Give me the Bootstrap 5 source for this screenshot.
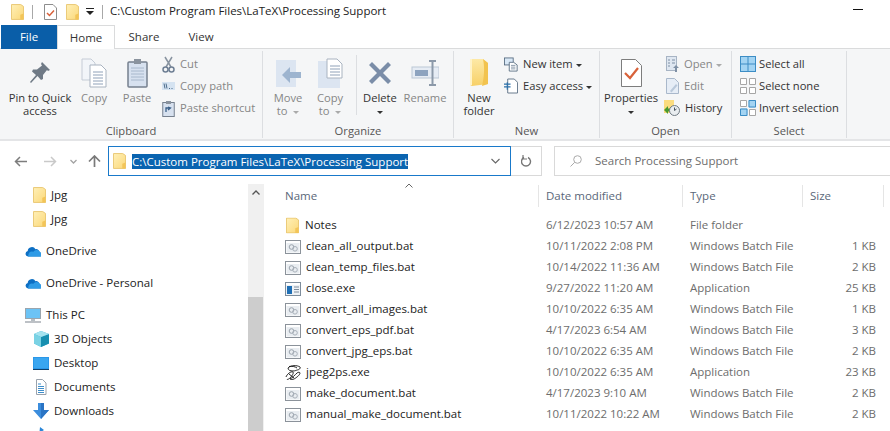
<!DOCTYPE html>
<html lang="en">
<head>
<meta charset="UTF-8">
<title>Processing Support</title>
<link href="https://cdn.jsdelivr.net/npm/bootstrap@5.3.3/dist/css/bootstrap.min.css" rel="stylesheet">
<style>
html, body { height: 100%; margin: 0; overflow: hidden; background: #fff; }
body { font-family: "Open Sans", "Noto Sans", sans-serif; font-size: 11.5px; color: #222; line-height: 1.25; }
svg { display: block; flex-shrink: 0; }

/* title bar */
.title-bar { height: 25px; padding-bottom: 2px; position: relative; }
.qa-sep { width: 1px; height: 14px; background: #a8a8a8; }
.min-btn { position: absolute; left: 853px; top: 9px; width: 10px; height: 1px; background: #111; }

/* tabs */
.tab-row { height: 24px; border-bottom: 1px solid #dadbdc; }
.rb-tab { width: 58px; height: 24px; line-height: 23px; text-align: center; font-size: 11.5px; color: #333; }
.rb-file { width: 56px; margin-left: 1px; background: #0a5ea8; color: #fff; }
.rb-home { background: #fff; border: 1px solid #dadbdc; border-bottom: 0; height: 24px; }

/* ribbon */
.ribbon { height: 92px; background: #f5f6f7; border-bottom: 2px solid #e4e5e7; padding-top: 2px; font-size: 11.2px; }
.rb-group { border-right: 1px solid #dcdee1; height: 87px; flex-shrink: 0; }
.rb-body { height: 72px; }
.rb-label { text-align: center; color: #555; height: 15px; line-height: 15px; }
.big-btn { display: flex; flex-direction: column; align-items: center; text-align: center; flex-shrink: 0; color: #333; }
.big-ico { height: 35px; margin-top: 4px; display: flex; align-items: center; justify-content: center; }
.big-txt { line-height: 13px; margin-top: 1px; }
.off { color: #868686; }
.small-col { padding-top: 2px; }
.small-btn { height: 22px; display: flex; align-items: center; gap: 5px; white-space: nowrap; color: #333; }
.small-btn.off { color: #868686; }
.drop { display: inline-block; width: 0; height: 0; border: 3px solid transparent; border-top: 3px solid #333; border-bottom: 0; vertical-align: middle; margin-left: 3px; }
.drop.off-drop { border-top-color: #aaa; }
.inner-sep { width: 1px; height: 60px; background: #dcdee1; margin: 4px 0; }

/* address row */
.addr-row { height: 38px; padding-top: 5px; }
.addr-box { width: 403px; height: 30px; margin-left: 6px; border: 1px solid #1979ca; flex-shrink: 0; }
.addr-sel { background: #0a64b0; color: #fff; height: 15px; line-height: 15px; font-size: 11.5px; white-space: nowrap; }
.refresh-box { width: 31px; height: 30px; border: 1px solid #d9d9d9; border-left: 0; flex-shrink: 0; }
.search-box { width: 336px; height: 30px; margin-left: 12px; border: 1px solid #d9d9d9; border-right: 0; color: #6d6d6d; flex-shrink: 0; }

/* bottom */
.main-area { height: 253px; }
.nav-pane { width: 248px; padding-top: 4px; flex-shrink: 0; }
.nav-row { height: 24px; display: flex; align-items: center; gap: 5px; padding-left: 25px; color: #222; white-space: nowrap; }
.nav-sub { padding-left: 33px; }
.nav-gap { margin-top: 8px; }
.scroll-bar { width: 16px; margin-top: 5px; background: #f0f0f0; flex-shrink: 0; }
.scroll-up { height: 113px; padding-top: 6px; }
.scroll-thumb { width: 15px; height: 135px; background: #cdcdcd; }

.file-pane { flex-grow: 1; position: relative; padding-left: 20px; }
.sort-mark { position: absolute; left: 141px; top: 4px; }
.head-row { height: 36px; padding-top: 6px; color: #5a6779; }
.head-cell { height: 22px; line-height: 22px; border-right: 1px solid #e5e5e5; flex-shrink: 0; }
.file-row { height: 21px; display: flex; align-items: center; white-space: nowrap; color: #6d6d6d; }
.col-name { width: 255px; padding-left: 1px; flex-shrink: 0; }
.col-date { width: 144px; padding-left: 7px; flex-shrink: 0; }
.col-type { width: 120px; padding-left: 7px; flex-shrink: 0; }
.col-size { width: 81px; padding-left: 7px; flex-shrink: 0; }
.size-val { width: 73px; text-align: right; flex-shrink: 0; }
.name-wrap { display: flex; align-items: center; gap: 5px; color: #222; }
</style>
</head>
<body>
<svg width="0" height="0" class="position-absolute">
  <defs>
    <linearGradient id="fgrad" x1="0" y1="0" x2="1" y2="1"><stop offset="0" stop-color="#fff0b8"/><stop offset="1" stop-color="#fbd879"/></linearGradient>
    <linearGradient id="fbig" x1="0" y1="0" x2="0" y2="1"><stop offset="0" stop-color="#fde9a6"/><stop offset="1" stop-color="#f7d067"/></linearGradient>
    <symbol id="folder" viewBox="0 0 14 17">
      <path d="M.5.5h10l3 2v14H.5z" fill="url(#fgrad)" stroke="#e8c56e"/>
      <path d="M10 16.5v-5l3.5-1.500v6.500z" fill="#f3c558"/>
    </symbol>
    <symbol id="bat" viewBox="0 0 16 14">
      <rect x=".5" y=".5" width="15" height="13" fill="#fff" stroke="#8b929a"/>
      <rect x="1.500" y="3" width="13" height="9.500" fill="#e9edf1"/>
      <circle cx="6.500" cy="7" r="2.300" fill="none" stroke="#9aa3ad"/>
      <circle cx="10" cy="8.800" r="2.300" fill="none" stroke="#a9b1ba"/>
    </symbol>
    <symbol id="cloud" viewBox="0 0 16 11">
      <path d="M3 10.500a2.800 2.800 0 0 1-.3-5.500 4.200 4.200 0 0 1 7.800-1.800 3.500 3.500 0 0 1 4.200 3.300 2 2 0 0 1 .8 4z" fill="#0d6fc4"/>
      <path d="M3 10.500h12a2 2 0 0 0 .3-3.900 4 4 0 0 0-7-.8 3.500 3.500 0 0 0-4.700 2z" fill="#2f9be6"/>
    </symbol>
  </defs>
</svg>

<!-- title bar -->
<div class="title-bar d-flex align-items-center">
  <svg width="13" height="16" style="margin-left:11px"><use href="#folder"/></svg>
  <div class="qa-sep" style="margin-left:8px"></div>
  <svg width="13" height="16" viewBox="0 0 13 16" style="margin-left:11px">
    <path d="M.5.500h8.500l3.500 3.500v11.500H.5z" fill="#fff" stroke="#8d8d8d"/>
    <path d="M3 9l2.500 2.500L10 6.500" fill="none" stroke="#d8603a" stroke-width="1.500"/>
  </svg>
  <svg width="13" height="16" style="margin-left:9px"><use href="#folder"/></svg>
  <svg width="8" height="7" viewBox="0 0 8 7" style="margin-left:7px"><path d="M0 .5h8" stroke="#222"/><path d="M0 3h8L4 7z" fill="#222"/></svg>
  <div class="qa-sep" style="margin-left:8px"></div>
  <div style="margin-left:7px">C:\Custom Program Files\LaTeX\Processing Support</div>
  <div class="min-btn"></div>
</div>

<!-- tabs -->
<div class="tab-row d-flex">
  <div class="rb-tab rb-file">File</div>
  <div class="rb-tab rb-home">Home</div>
  <div class="rb-tab">Share</div>
  <div class="rb-tab" style="width:56px">View</div>
</div>

<!-- ribbon -->
<div class="ribbon d-flex">
  <!-- clipboard -->
  <div class="rb-group" style="width:263px">
    <div class="rb-body d-flex">
      <div class="big-btn" style="width:72px;margin-left:4px">
        <div class="big-ico"><svg width="22" height="24" viewBox="0 0 22 24"><path d="M13 1l8 8-2 1-1-1-4 5 0 4-2 1-3.500-4L2 22l-1-1 6-7-4-3.500 1-2h4l5-4-1-1.500z" fill="#6f7a86"/></svg></div>
        <div class="big-txt">Pin to Quick<br>access</div>
      </div>
      <div class="big-btn off" style="width:36px">
        <div class="big-ico"><svg width="26" height="30" viewBox="0 0 26 30"><path d="M1 1h9l4 4v17H1z" fill="#f2f5f9" stroke="#c5ccd6"/><path d="M9 7h11l5 5v17H9z" fill="#fff" stroke="#a9b3c0"/><path d="M12 14h10M12 17h10M12 20h10M12 23h10M12 26h10" stroke="#8fa1b8"/></svg></div>
        <div class="big-txt">Copy</div>
      </div>
      <div class="big-btn off" style="width:50px">
        <div class="big-ico"><svg width="21" height="30" viewBox="0 0 21 30"><rect x="1" y="4" width="19" height="25" rx="1" fill="#d7e1ef" stroke="#76808e" stroke-width="1.500"/><rect x="7" y="1" width="7" height="5" fill="#8a939e"/><path d="M4 10h13M4 13h13M4 16h13M4 19h13M4 22h13" stroke="#a8b8cc"/></svg></div>
        <div class="big-txt">Paste</div>
      </div>
      <div class="small-col">
        <div class="small-btn off"><svg width="13" height="17" viewBox="0 0 13 17"><path d="M3 1l6 10M10 1L4 11" stroke="#8893a0" stroke-width="1.500"/><circle cx="3.500" cy="13.500" r="2.500" fill="none" stroke="#6e7f94" stroke-width="1.500"/><circle cx="9.500" cy="13.500" r="2.500" fill="none" stroke="#6e7f94" stroke-width="1.500"/></svg>Cut</div>
        <div class="small-btn off"><svg width="13" height="8" viewBox="0 0 13 8"><rect width="13" height="8" fill="#d5e3f1"/><path d="M2 1.500l1 5M4 1.500l1 5M7 6.500h1M9.500 6.500h1" stroke="#4c6c8c"/></svg>Copy path</div>
        <div class="small-btn off"><svg width="13" height="16" viewBox="0 0 13 16" style="margin-top:1px"><rect x=".75" y="1.500" width="11.500" height="14" fill="#d7e1ef" stroke="#76808e"/><rect x="4" y="0" width="5" height="3" fill="#8a939e"/><path d="M4 11V7h4M6 6l2.500 1L6 9" fill="none" stroke="#3a5f88" stroke-width="1.300"/></svg>Paste shortcut</div>
      </div>
    </div>
    <div class="rb-label">Clipboard</div>
  </div>
  <!-- organize -->
  <div class="rb-group" style="width:191px">
    <div class="rb-body d-flex">
      <div class="big-btn off" style="width:50px">
        <div class="big-ico"><svg width="28" height="28" viewBox="0 0 28 28"><rect x="2" y="1" width="20" height="27" fill="#dce5f1"/><path d="M27 13h-11V8l-8 8 8 8v-5h11z" fill="#9db4cf"/></svg></div>
        <div class="big-txt">Move<br>to <span class="drop off-drop"></span></div>
      </div>
      <div class="big-btn off" style="width:34px">
        <div class="big-ico"><svg width="26" height="30" viewBox="0 0 26 30"><rect x="1" y="3" width="22" height="27" fill="#dce5f1"/><path d="M10 1h10l5 5v14H10z" fill="#fff" stroke="#a9b3c0"/><path d="M13 8h10M13 11h10M13 14h10M13 17h10" stroke="#8fa1b8"/></svg></div>
        <div class="big-txt">Copy<br>to <span class="drop off-drop"></span></div>
      </div>
      <div style="width:9px"></div>
      <div class="inner-sep"></div>
      <div class="big-btn" style="width:46px">
        <div class="big-ico"><svg width="26" height="26" viewBox="0 0 26 26"><path d="M2 5l3-3 8 8 8-8 3 3-8 8 8 8-3 3-8-8-8 8-3-3 8-8z" fill="#7b8da8"/></svg></div>
        <div class="big-txt">Delete<br><span class="drop m-0"></span></div>
      </div>
      <div class="big-btn off" style="width:44px">
        <div class="big-ico"><svg width="28" height="26" viewBox="0 0 28 26"><rect x="1" y="7" width="27" height="11" fill="#e6ecf4" stroke="#bcc7d5"/><rect x="4" y="10" width="13" height="6" fill="#8da3bf"/><path d="M18 1h7M18 25h7M21.500 1v24" stroke="#8c99a9" stroke-width="2"/></svg></div>
        <div class="big-txt">Rename</div>
      </div>
    </div>
    <div class="rb-label">Organize</div>
  </div>
  <!-- new -->
  <div class="rb-group" style="width:146px">
    <div class="rb-body d-flex">
      <div class="big-btn" style="width:50px">
        <div class="big-ico"><svg width="20" height="27" viewBox="0 0 20 27"><path d="M1 0h13l5 4v21l-16 2-2-1z" fill="url(#fbig)"/><path d="M1 0h2v26l-2 0z" fill="#fff3c9"/><path d="M14 0l5 4v21l-6 2c2-8 3-18 1-27z" fill="#f2c34f"/></svg></div>
        <div class="big-txt">New<br>folder</div>
      </div>
      <div class="small-col">
        <div class="small-btn"><svg width="14" height="15" viewBox="0 0 16 16"><rect x=".5" y=".5" width="10" height="8" fill="#d9e8f6" stroke="#566b80"/><path d="M6 5.500h5l4 3v7H6z" fill="#fff" stroke="#566b80"/><path d="M8 9h5M8 11h5M8 13h5" stroke="#7e8fa1"/></svg><span>New item <span class="drop m-0"></span></span></div>
        <div class="small-btn"><svg width="14" height="16" viewBox="0 0 15 16"><path d="M4 .5h7l3.500 3.500v11.500H4z" fill="#fff" stroke="#5f7286"/><path d="M0 6h7M0 9h7M3.500 4v8" stroke="#2a6fa8" stroke-width="1.200"/></svg><span>Easy access <span class="drop m-0"></span></span></div>
      </div>
    </div>
    <div class="rb-label">New</div>
  </div>
  <!-- open -->
  <div class="rb-group" style="width:132px">
    <div class="rb-body d-flex">
      <div class="big-btn" style="width:62px">
        <div class="big-ico"><svg width="21" height="28" viewBox="0 0 21 28"><path d="M.5.500h14l6 6v21H.5z" fill="#fff" stroke="#7d7d7d"/><path d="M4 14l5 5 8-10" fill="none" stroke="#d8623a" stroke-width="2.200"/></svg></div>
        <div class="big-txt">Properties<br><span class="drop m-0"></span></div>
      </div>
      <div class="small-col" style="padding-left:4px">
        <div class="small-btn off"><svg width="13" height="16" viewBox="0 0 13 16"><rect x=".5" y=".5" width="10" height="14" fill="#dfe7f1" stroke="#a7b4c4"/><path d="M2 4h2M2 7h2M2 10h2M6 4h3M6 7h3" stroke="#7f90a5"/><path d="M10 9l3 3h-2v4H9v-4H7z" fill="#7f90a5"/></svg><span>Open <span class="drop off-drop m-0"></span></span></div>
        <div class="small-btn off"><svg width="13" height="16" viewBox="0 0 13 16"><path d="M.5.500h8l4 4v11H.5z" fill="#e6edf6" stroke="#a9b8cb"/><path d="M4 13l6-7 1.500 1.500-6 7z" fill="#b9c8da"/></svg>Edit</div>
        <div class="small-btn" style="margin-left:-2px"><svg width="16" height="16" viewBox="0 0 16 16"><rect x="0" y="0" width="10" height="13" fill="#fbdc7f"/><path d="M0 10l4-4 0 2.500h4v3H4V14z" fill="#4a9a2e"/><circle cx="10.500" cy="10.500" r="5" fill="#e9edf0" stroke="#6f7a83"/><path d="M10.500 7.500v3l2-1.500" fill="none" stroke="#4a5560"/></svg>History</div>
      </div>
    </div>
    <div class="rb-label">Open</div>
  </div>
  <!-- select -->
  <div class="rb-group" style="width:115px">
    <div class="rb-body small-col ps-2">
      <div class="small-btn" style="gap:3px"><svg width="16" height="16" viewBox="0 0 16 16"><rect width="16" height="16" fill="#3c8dc5"/><path d="M1 1h6.500v6.500H1zM8.500 1H15v6.500H8.500zM1 8.500h6.500V15H1zM8.500 8.500H15V15H8.500z" fill="#a3d4f3"/></svg>Select all</div>
      <div class="small-btn" style="gap:3px"><svg width="16" height="16" viewBox="0 0 16 16"><path d="M.5.500h6v6h-6zM9.500.500h6v6h-6zM.5 9.500h6v6h-6zM9.500 9.500h6v6h-6z" fill="#fff" stroke="#a6a6a6"/></svg>Select none</div>
      <div class="small-btn" style="gap:3px"><svg width="16" height="16" viewBox="0 0 16 16"><path d="M.5.500h6v6h-6zM9.500 9.500h6v6h-6z" fill="#fff" stroke="#a6a6a6"/><path d="M8.500 0H16v7.500H8.500zM0 8.500h7.500V16H0z" fill="#a3d4f3"/><path d="M9 .500h6.500V7H9zM.5 9h6.500v6.500H.5z" fill="none" stroke="#3c8dc5"/></svg>Invert selection</div>
    </div>
    <div class="rb-label">Select</div>
  </div>
</div>

<!-- address row -->
<div class="addr-row d-flex">
  <div class="d-flex align-items-center" style="width:102px;height:30px;flex-shrink:0">
    <svg width="13" height="11" viewBox="0 0 13 11" style="margin-left:14px"><path d="M13 5.500H1.500M6 1L1.500 5.500 6 10" fill="none" stroke="#7d7d7d" stroke-width="1.500"/></svg>
    <svg width="13" height="11" viewBox="0 0 13 11" style="margin-left:17px"><path d="M0 5.500h11.500M7 1l4.500 4.500L7 10" fill="none" stroke="#c9c9c9" stroke-width="1.500"/></svg>
    <svg width="7" height="5" viewBox="0 0 7 5" style="margin-left:13px"><path d="M.5 1l3 3 3-3" fill="none" stroke="#a3a3a3" stroke-width="1.300"/></svg>
    <svg width="13" height="12" viewBox="0 0 13 12" style="margin-left:11px"><path d="M6.500 12V1.500M1 6.500l5.500-5.500L12 6.500" fill="none" stroke="#7a7a7a" stroke-width="1.700"/></svg>
  </div>
  <div class="addr-box d-flex align-items-center">
    <svg width="13" height="16" style="margin-left:4px"><use href="#folder"/></svg>
    <div class="addr-sel" style="margin-left:6px">C:\Custom Program Files\LaTeX\Processing Support</div>
    <svg width="9" height="6" viewBox="0 0 9 6" class="ms-auto" style="margin-right:10px"><path d="M.5 1l4 4 4-4" fill="none" stroke="#666" stroke-width="1.100"/></svg>
  </div>
  <div class="refresh-box d-flex align-items-center justify-content-center">
    <svg width="11" height="12" viewBox="0 0 11 12"><path d="M3 2.500a4.500 4.500 0 1 0 4 0" fill="none" stroke="#777" stroke-width="1.400"/><path d="M2 0v4h4" fill="none" stroke="#777" stroke-width="1.200"/></svg>
  </div>
  <div class="search-box d-flex align-items-center">
    <svg width="12" height="12" viewBox="0 0 12 12" style="margin-left:15px"><circle cx="7.500" cy="4.500" r="3.800" fill="none" stroke="#aaa"/><path d="M4.700 7.300L.5 11.500" stroke="#aaa"/></svg>
    <div style="margin-left:13px">Search Processing Support</div>
  </div>
</div>

<div class="main-area d-flex">
  <!-- navigation pane -->
  <div class="nav-pane">
    <div class="nav-row nav-sub"><svg width="13" height="16"><use href="#folder"/></svg><span>Jpg</span></div>
    <div class="nav-row nav-sub"><svg width="13" height="16"><use href="#folder"/></svg><span>Jpg</span></div>
    <div class="nav-row nav-gap"><svg width="16" height="11"><use href="#cloud"/></svg><span>OneDrive</span></div>
    <div class="nav-row nav-gap"><svg width="16" height="11"><use href="#cloud"/></svg><span>OneDrive - Personal</span></div>
    <div class="nav-row nav-gap"><svg width="16" height="15" viewBox="0 0 16 15"><rect x=".5" y=".5" width="15" height="10" fill="#6cc3f5" stroke="#9aa5ae"/><path d="M6 11h4v2H6z" fill="#b6bdc3"/><path d="M0 14h16" stroke="#a7adb3" stroke-width="1.500"/></svg><span>This PC</span></div>
    <div class="nav-row nav-sub"><svg width="16" height="16" viewBox="0 0 16 16"><path d="M8 0l8 3v9.500L8 16 1 12.500V3z" fill="#3fb6d6"/><path d="M8 6l8-3v9.500L8 16z" fill="#178fb0"/><path d="M1 3l7 3 8-3-8-3z" fill="#a5e3ef"/><path d="M1 3l7 3v10l-7-3.500z" fill="#7ad2e4"/></svg><span>3D Objects</span></div>
    <div class="nav-row nav-sub"><svg width="16" height="13" viewBox="0 0 16 13"><rect width="16" height="12" fill="#2b97e8"/><rect x="1" y="1" width="14" height="10" fill="#3aa6f0"/><path d="M0 12.500h16" stroke="#10406b"/></svg><span>Desktop</span></div>
    <div class="nav-row nav-sub"><svg width="16" height="16" viewBox="0 0 16 16"><path d="M3.500.500h6l3.500 3.500v11.500H3.500z" fill="#fff" stroke="#99a2ac"/><path d="M5 5h3M5 7.500h6M5 9.500h6M5 11.500h6M5 13.500h6" stroke="#3e8ecb"/></svg><span>Documents</span></div>
    <div class="nav-row nav-sub"><svg width="16" height="16" viewBox="0 0 16 16"><path d="M5 0h6v7h5l-8 9-8-9h5z" fill="#3b8ddd"/><path d="M11 0v7h5l-8 9V0z" fill="#2a74c4"/></svg><span>Downloads</span></div>
    <div class="nav-row nav-sub"><svg width="16" height="16" viewBox="0 0 16 16"><path d="M7 0l4 3-3 2v8a3 3 0 1 1-2-3z" fill="#2a86d8"/></svg><span>Music</span></div>
  </div>
  <div class="scroll-bar">
    <div class="scroll-up d-flex justify-content-center"><svg width="8" height="5" viewBox="0 0 8 5"><path d="M.5 4.500L4 1l3.500 3.500" fill="none" stroke="#555" stroke-width="1.300"/></svg></div>
    <div class="scroll-thumb"></div>
  </div>

  <!-- file list -->
  <div class="file-pane">
    <svg class="sort-mark" width="8" height="5" viewBox="0 0 8 5"><path d="M.5 4.500L4 1l3.500 3.500" fill="none" stroke="#666"/></svg>
    <div class="head-row d-flex align-items-start">
      <div class="head-cell col-name">Name</div>
      <div class="head-cell col-date">Date modified</div>
      <div class="head-cell col-type">Type</div>
      <div class="head-cell col-size">Size</div>
    </div>
    <div class="file-row"><div class="col-name name-wrap"><svg width="15" height="17" viewBox="0 0 14 17" style="padding:0 1px"><use href="#folder"/></svg><span>Notes</span></div><div class="col-date">6/12/2023 10:57 AM</div><div class="col-type">File folder</div></div>
    <div class="file-row"><div class="col-name name-wrap"><svg width="16" height="14"><use href="#bat"/></svg><span>clean_all_output.bat</span></div><div class="col-date">10/11/2022 2:08 PM</div><div class="col-type">Windows Batch File</div><div class="size-val">1 KB</div></div>
    <div class="file-row"><div class="col-name name-wrap"><svg width="16" height="14"><use href="#bat"/></svg><span>clean_temp_files.bat</span></div><div class="col-date">10/14/2022 11:36 AM</div><div class="col-type">Windows Batch File</div><div class="size-val">2 KB</div></div>
    <div class="file-row"><div class="col-name name-wrap"><svg width="16" height="14" viewBox="0 0 16 14"><rect x=".5" y=".5" width="15" height="13" fill="#fff" stroke="#7e8d9c"/><rect x="1" y="3" width="14" height="10" fill="#eef2f6"/><rect x="2" y="4" width="5" height="8" fill="#1f6fb5"/><path d="M9 5h5M9 7.500h5M9 10h5" stroke="#7e8d9c"/></svg><span>close.exe</span></div><div class="col-date">9/27/2022 11:20 AM</div><div class="col-type">Application</div><div class="size-val">25 KB</div></div>
    <div class="file-row"><div class="col-name name-wrap"><svg width="16" height="14"><use href="#bat"/></svg><span>convert_all_images.bat</span></div><div class="col-date">10/10/2022 6:35 AM</div><div class="col-type">Windows Batch File</div><div class="size-val">1 KB</div></div>
    <div class="file-row"><div class="col-name name-wrap"><svg width="16" height="14"><use href="#bat"/></svg><span>convert_eps_pdf.bat</span></div><div class="col-date">4/17/2023 6:54 AM</div><div class="col-type">Windows Batch File</div><div class="size-val">3 KB</div></div>
    <div class="file-row"><div class="col-name name-wrap"><svg width="16" height="14"><use href="#bat"/></svg><span>convert_jpg_eps.bat</span></div><div class="col-date">10/10/2022 6:35 AM</div><div class="col-type">Windows Batch File</div><div class="size-val">2 KB</div></div>
    <div class="file-row"><div class="col-name name-wrap"><svg width="16" height="16" viewBox="0 0 16 16"><path d="M3 3c3-3 9-3 12-1 1 1-1 3-3 3M3 3c0 2 2 3 5 3 2 0 4-1 4-1M4 1.500c3-.5 6 0 8 1.500" fill="none" stroke="#111" stroke-width=".9"/><path d="M1 12c1-3 5-6 7-5 1 1-1 4-3 6-1 1-3 2-3 1M5 14c2-1 5-4 7-6 1-1 3-1 3 0 0 2-4 5-6 6-1 .5-3 .5-4 0M4 9l5 4" fill="none" stroke="#111" stroke-width=".9"/></svg><span>jpeg2ps.exe</span></div><div class="col-date">10/10/2022 6:35 AM</div><div class="col-type">Application</div><div class="size-val">23 KB</div></div>
    <div class="file-row"><div class="col-name name-wrap"><svg width="16" height="14"><use href="#bat"/></svg><span>make_document.bat</span></div><div class="col-date">4/17/2023 9:10 AM</div><div class="col-type">Windows Batch File</div><div class="size-val">2 KB</div></div>
    <div class="file-row"><div class="col-name name-wrap"><svg width="16" height="14"><use href="#bat"/></svg><span>manual_make_document.bat</span></div><div class="col-date">10/11/2022 10:22 AM</div><div class="col-type">Windows Batch File</div><div class="size-val">2 KB</div></div>
  </div>
</div>

<script src="https://cdn.jsdelivr.net/npm/bootstrap@5.3.3/dist/js/bootstrap.bundle.min.js"></script>
</body>
</html>
